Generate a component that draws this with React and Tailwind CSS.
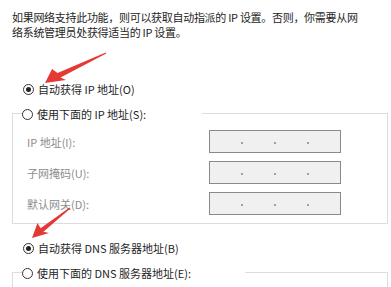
import React from "react";

function Radio({ checked }) {
  return (
    <span className="flex h-[11px] w-[11px] shrink-0 items-center justify-center rounded-full border border-[#333333] bg-white">
      {checked && <span className="h-[5px] w-[5px] rounded-full bg-[#222222]" />}
    </span>
  );
}

function RadioRow({ checked, label }) {
  return (
    <div className="flex h-[24px] items-center gap-[4px] pl-[11px]">
      <Radio checked={checked} />
      <span className="text-[#1e1e1e]">{label}</span>
    </div>
  );
}

function GroupHeader({ label, labelWidth }) {
  return (
    <div className="flex h-[26px]">
      <div className="mt-[12px] w-[10px] border-l border-t border-[#dcdcdc]" />
      <div className="flex items-center gap-[4px]" style={{ width: labelWidth }}>
        <Radio checked={false} />
        <span className="text-[#1e1e1e]">{label}</span>
      </div>
      <div className="mt-[12px] flex-1 border-r border-t border-[#dcdcdc]" />
    </div>
  );
}

function IpBox() {
  return (
    <div className="flex h-[23px] w-[132px] items-center justify-evenly border border-[#8a8a8a] bg-[#f0f0f0] pt-[2px]">
      <span className="h-[2px] w-[2px] bg-[#a0a0a0]" />
      <span className="h-[2px] w-[2px] bg-[#a0a0a0]" />
      <span className="h-[2px] w-[2px] bg-[#a0a0a0]" />
    </div>
  );
}

function FieldRow({ label }) {
  return (
    <div className="flex h-[23px] items-center">
      <span className="w-[182px] pt-[2px] text-[#8c8c8c]">{label}</span>
      <IpBox />
    </div>
  );
}

export default function App() {
  return (
    <div
      className="relative h-[287px] w-[391px] overflow-hidden bg-white text-[11px] leading-[15px]"
      style={{ fontFamily: '"Noto Sans CJK SC", "Microsoft YaHei", sans-serif' }}
    >
      <div className="pl-[12px] pr-[3px]">
        <p className="pt-[10px] tracking-[-0.3px] text-[#1e1e1e]">
          如果网络支持此功能，则可以获取自动指派的 IP 设置。否则，你需要从网
          <br />
          络系统管理员处获得适当的 IP 设置。
        </p>

        <div className="mt-[37px]">
          <RadioRow checked label="自动获得 IP 地址(O)" />
        </div>

        <GroupHeader label="使用下面的 IP 地址(S):" labelWidth="180px" />
        <div className="flex flex-col gap-[8px] border-x border-b border-[#dcdcdc] pb-[8px] pl-[14px] pt-[3px]">
          <FieldRow label="IP 地址(I):" />
          <FieldRow label="子网掩码(U):" />
          <FieldRow label="默认网关(D):" />
        </div>

        <div className="mt-[12px]">
          <RadioRow checked label="自动获得 DNS 服务器地址(B)" />
        </div>

        <GroupHeader label="使用下面的 DNS 服务器地址(E):" labelWidth="223px" />
        <div className="h-[40px] border-x border-[#dcdcdc]" />
      </div>

      <svg
        className="pointer-events-none absolute left-0 top-0"
        width="391"
        height="287"
        viewBox="0 0 391 287"
      >
        <polygon
          points="45,83 66,80 60.5,77.5 106.3,53.5 105.7,52.5 57.5,73 52,69"
          fill="#e53935"
        />
        <polygon
          points="32,238 49,233 43.4,231.7 70.4,208.5 69.6,207.5 40.6,228.3 37.5,223"
          fill="#e53935"
        />
      </svg>
    </div>
  );
}
